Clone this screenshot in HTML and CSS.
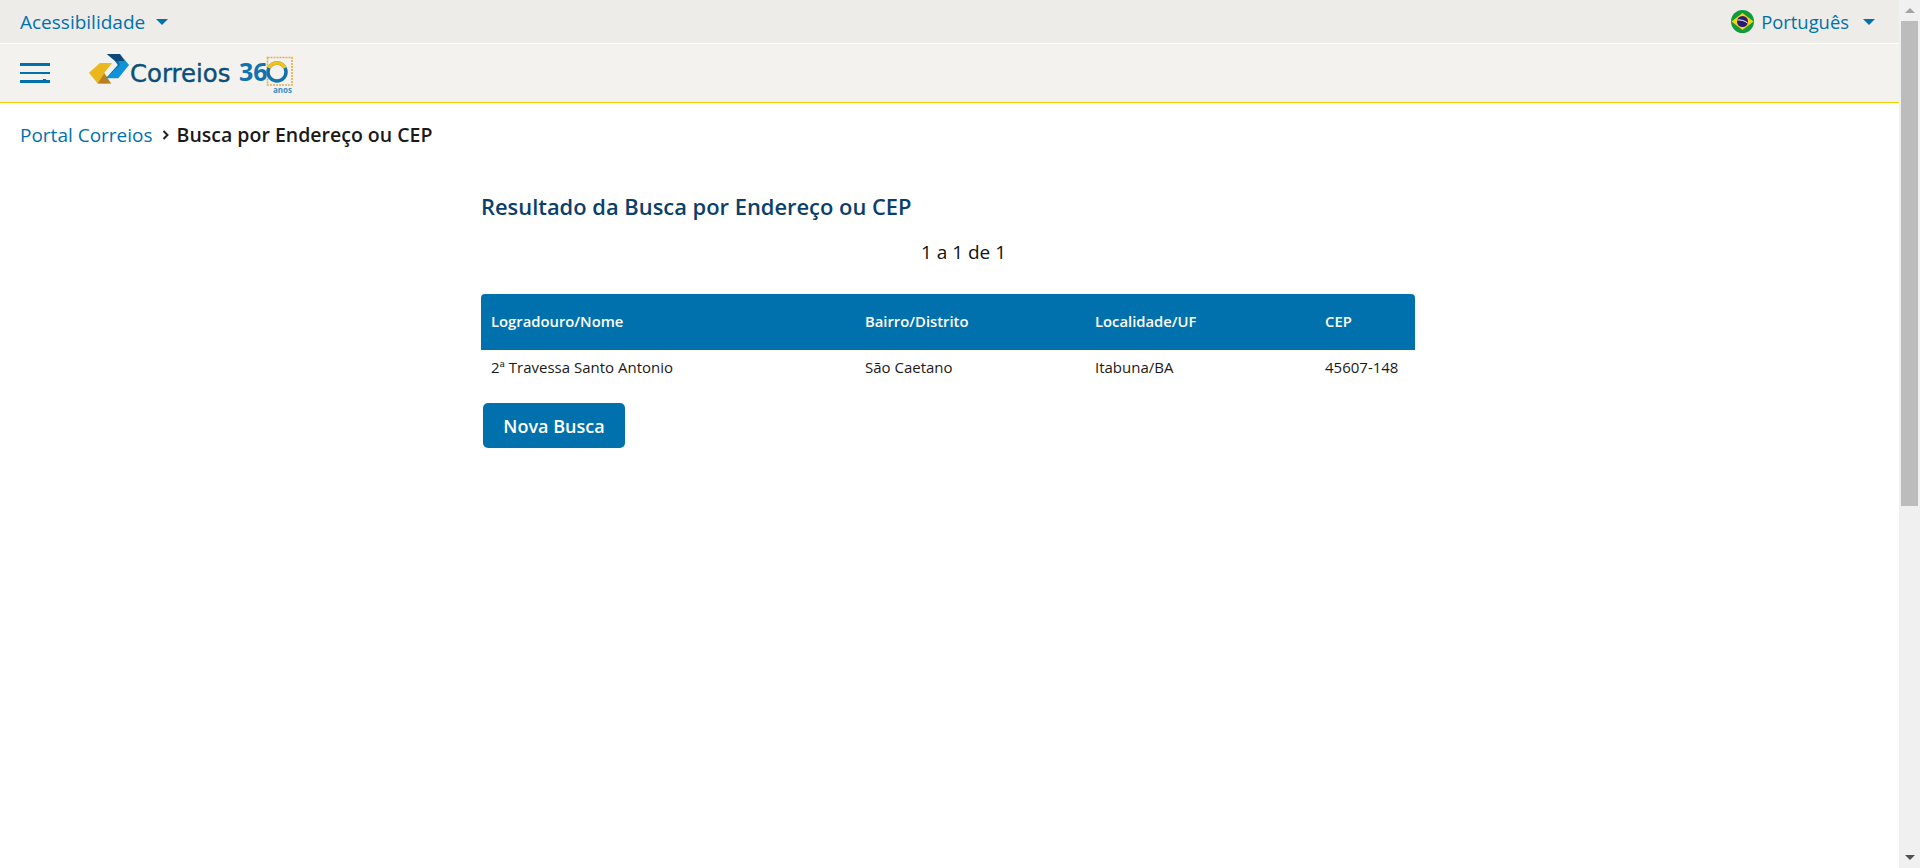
FILE: index.html
```html
<!DOCTYPE html>
<html lang="pt-BR">
<head>
  <meta charset="UTF-8">
  <meta name="viewport" content="width=device-width, initial-scale=1.0">
  <title>Busca por Endereço ou CEP</title>
  <link rel="stylesheet" href="styles.css">
</head>
<body>
  <div class="pagina">
    <div class="barra-topo">
      <a class="link-topo" href="#">Acessibilidade <span class="seta"></span></a>
      <a class="link-topo idioma" href="#">
        <svg class="bandeira" width="23" height="23" viewBox="0 0 23 23">
          <circle cx="11.500" cy="11.500" r="11.500" fill="#109a3c"/>
          <path d="M11.500 3 22.500 11.500 11.500 20 .5 11.500z" fill="#f6d30c"/>
          <circle cx="11.500" cy="11.500" r="5.500" fill="#2b1a78"/>
          <path d="M6.300 10c3.500-.4 7.500 .6 10.200 3" fill="none" stroke="#fff" stroke-width="1"/>
        </svg>
        <span>Português</span>
        <span class="seta seta-idioma"></span>
      </a>
    </div>

    <header class="cabecalho">
      <button class="menu" aria-label="Menu">
        <span></span><span></span><span></span>
      </button>
      <svg class="logo" width="206" height="46" viewBox="0 0 206 46">
        <path d="M0 22.700 11 13H23L15.300 22.700 22 33.500H8.700z" fill="#eab71f"/>
        <path d="M15.300 23.500 22 33.500H8.700z" fill="#b97f20"/>
        <path d="M17.700 4H31L36 11H26z" fill="#0b4a78"/>
        <path d="M31 4 40 15 29.300 28.300H16.700L29 15 26 11H36z" fill="#0f93d6"/>
        <path d="M26 11H29.500L31 15 20 25 29 15z" fill="#0b6ca8"/>
        <text x="41" y="32" class="logo-correios">Correios</text>
        <text x="150" y="31" class="logo-360">36</text>
        <rect x="178.500" y="7.500" width="24.500" height="27.500" fill="none" stroke="#e6b04e" stroke-width="1.700" stroke-dasharray="2 1"/>
        <circle cx="188" cy="22" r="9" fill="none" stroke="#1272ad" stroke-width="3.500"/>
        <path d="M180 18a9 9 0 0 1 16 0" fill="none" stroke="#f0c31b" stroke-width="3.500"/>
        <text x="184" y="43" class="logo-anos">anos</text>
      </svg>
    </header>

    <nav class="migalhas">
      <a href="#">Portal Correios</a>
      <svg class="divisor" width="7" height="10" viewBox="0 0 7 10"><path d="M1.500 1 5.500 5 1.500 9" fill="none" stroke="#222" stroke-width="2"/></svg>
      <strong>Busca por Endereço ou CEP</strong>
    </nav>

    <main class="conteudo">
      <h2>Resultado da Busca por Endereço ou CEP</h2>
      <p class="contagem">1 a 1 de 1</p>
      <table class="resultado">
        <thead>
          <tr>
            <th>Logradouro/Nome</th>
            <th>Bairro/Distrito</th>
            <th>Localidade/UF</th>
            <th>CEP</th>
          </tr>
        </thead>
        <tbody>
          <tr>
            <td>2ª Travessa Santo Antonio</td>
            <td>São Caetano</td>
            <td>Itabuna/BA</td>
            <td>45607-148</td>
          </tr>
        </tbody>
      </table>
      <button class="nova-busca">Nova Busca</button>
    </main>
  </div>

  <div class="rolagem">
    <span class="seta-rolagem cima"></span>
    <div class="trilho"><div class="polegar"></div></div>
    <span class="seta-rolagem baixo"></span>
  </div>
</body>
</html>
```

FILE: styles.css
```css
html, body {
  height: 100%;
}
body {
  font-family: "Open Sans", Arial, sans-serif;
  background-color: #fff;
  color: #1a1a1a;
  margin: 0;
  display: flex;
  overflow: hidden;
}
a {
  text-decoration: none;
  color: #0071ad;
}
.pagina {
  flex: 1;
  min-width: 0;
}
.barra-topo {
  height: 43px;
  background-color: #eeece9;
  border-bottom: 1px solid #fff;
  display: flex;
  justify-content: space-between;
  align-items: center;
  padding: 0 24px 0 20px;
}
.link-topo {
  font-size: 19px;
  display: flex;
  align-items: center;
  gap: 11px;
}
.idioma {
  font-size: 18.400px;
  gap: 7px;
}
.seta {
  width: 0;
  height: 0;
  border-left: 6px solid transparent;
  border-right: 6px solid transparent;
  border-top: 6px solid #0071ad;
}
.seta-idioma {
  margin-left: 7px;
}
.cabecalho {
  height: 58px;
  background-color: #f3f2ef;
  border-bottom: 1px solid #f7d000;
  display: flex;
  align-items: center;
  padding-left: 20px;
}
.menu {
  width: 30px;
  padding: 0;
  border: none;
  background: none;
  display: flex;
  flex-direction: column;
  gap: 6px;
  margin-right: 39px;
}
.menu span {
  height: 3px;
  background-color: #0071ad;
}
.menu span:nth-child(2) {
  height: 2px;
}
.menu span:last-child {
  position: relative;
}
/* dentinho da ultima barra */
.menu span:last-child::after {
  content: "";
  position: absolute;
  left: 23px;
  top: -1px;
  width: 3px;
  height: 1px;
  background-color: #0071ad;
}
.logo {
  display: block;
}
.logo-correios {
  font-family: "DejaVu Sans", sans-serif;
  font-size: 24.400px;
  fill: #0d4f78;
  stroke: #0d4f78;
  stroke-width: .4px;
}
.logo-360 {
  font-size: 25px;
  font-weight: 700;
  fill: #1272ad;
}
.logo-anos {
  font-size: 8px;
  font-weight: 700;
  fill: #3b8fc4;
}
.migalhas {
  display: flex;
  align-items: center;
  font-size: 19px;
  padding: 20px 20px 0;
  line-height: 24px;
}
.divisor {
  margin: 0 8px 0 9px;
}
.migalhas strong {
  font-size: 19.500px;
  font-weight: 600;
}
.conteudo {
  width: 934px;
  margin-left: 481px;
  padding-top: 45px;
}
h2 {
  margin: 0;
  font-size: 21.900px;
  line-height: 30px;
  font-weight: 600;
  color: #0b3f6b;
}
.contagem {
  margin: 18px 0 0;
  padding-left: 31px;
  font-size: 19px;
  line-height: 24px;
  text-align: center;
  color: #111;
}
.resultado {
  width: 100%;
  margin-top: 30px;
  border-collapse: collapse;
  table-layout: fixed;
  font-size: 15px;
}
th {
  box-sizing: border-box;
  height: 56px;
  padding: 0 10px 2px;
  background-color: #0071ad;
  color: #fff;
  text-align: left;
  font-size: 14.800px;
  font-weight: 600;
}
th:first-child {
  width: 374px;
  border-top-left-radius: 4px;
}
th:nth-child(2),
th:nth-child(3) {
  width: 230px;
}
th:last-child {
  border-top-right-radius: 4px;
}
td {
  box-sizing: border-box;
  height: 36px;
  padding: 0 10px 2px;
}
.nova-busca {
  display: block;
  margin: 17px 0 0 2px;
  width: 142px;
  height: 45px;
  background-color: #0071ad;
  color: #fff;
  border: none;
  border-radius: 5px;
  font-family: inherit;
  font-size: 18px;
  font-weight: 600;
}
.rolagem {
  width: 21px;
  flex-shrink: 0;
  background-color: #f0f0f0;
  display: flex;
  flex-direction: column;
  align-items: center;
}
.seta-rolagem {
  width: 0;
  height: 0;
  border-left: 5px solid transparent;
  border-right: 5px solid transparent;
  margin: 8px 0;
}
.cima {
  border-bottom: 5px solid #a3a3a3;
}
.baixo {
  border-top: 5px solid #505050;
}
.trilho {
  flex: 1;
  width: 100%;
  padding: 0 2px;
  box-sizing: border-box;
}
.polegar {
  height: 485px;
  background-color: #bcbcbc;
}
```
